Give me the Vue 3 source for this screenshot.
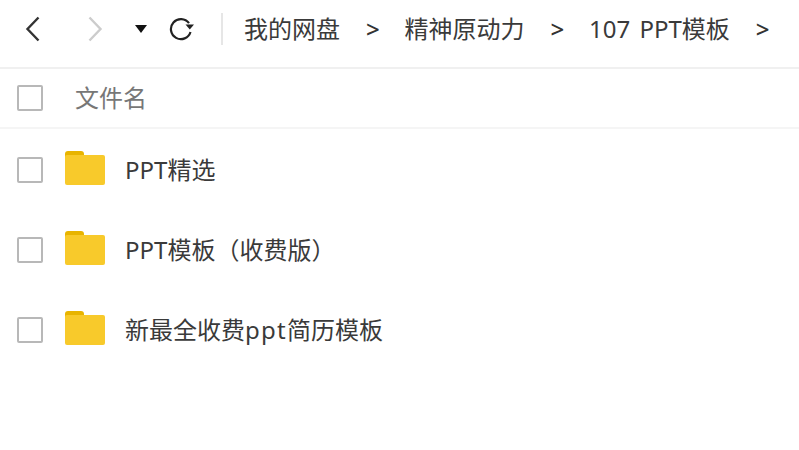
<script setup>
const crumbs = ['我的网盘', '精神原动力', '107 PPT模板']
const files = [
  ['PPT精选'],
  ['PPT模板（收费版）'],
  ['新最全收费', 'ppt', '简历模板'],
]
</script>

<template>
  <div class="page">
    <header class="toolbar">
      <svg class="ico back" width="16" height="26" viewBox="0 0 16 26"><path d="M13.5 1.5 2.5 13l11 11.5" /></svg>
      <svg class="ico fwd" width="16" height="26" viewBox="0 0 16 26"><path d="M2.5 1.5 13.5 13l-11 11.5" /></svg>
      <svg class="caret" width="12" height="8" viewBox="0 0 12 8"><path d="M0 0h12L6 8z" /></svg>
      <svg class="refresh" width="26" height="24" viewBox="0 0 26 24">
        <path d="M20 6.200A10 10 0 1 0 21.500 15" />
        <path class="fill" d="M16.500 7.500h8.500l-4.200 5z" />
      </svg>
      <span class="divider"></span>
      <nav class="crumbs">
        <template v-for="c in crumbs" :key="c">
          <span class="crumb">{{ c }}</span>
          <span class="sep">&gt;</span>
        </template>
      </nav>
    </header>
    <div class="head-row">
      <span class="check"></span>
      <span class="col">文件名</span>
    </div>
    <ul class="list">
      <li v-for="f in files" :key="f[0]" class="row">
        <span class="check"></span>
        <svg class="folder" width="40" height="34" viewBox="0 0 40 34">
          <path fill="#e8b400" d="M0 3a3 3 0 0 1 3-3h13a3 3 0 0 1 3 3v3H0z" />
          <path fill="#f8ca2b" d="M0 6a2 2 0 0 1 2-2h36a2 2 0 0 1 2 2v26a2 2 0 0 1-2 2H2a2 2 0 0 1-2-2z" />
        </svg>
        <span class="name"><span v-for="(p, i) in f" :key="i" :class="{ latin: i === 1 }">{{ p }}</span></span>
      </li>
    </ul>
  </div>
</template>

<style>
html, body { margin: 0; background: #fff; }
</style>

<style scoped>
.page {
  width: 799px;
  height: 450px;
  overflow: hidden;
  background: #fff;
  font-family: "Noto Sans", "Noto Sans CJK SC", sans-serif;
  color: #3a3a3a;
}
.toolbar {
  box-sizing: border-box;
  height: 69px;
  padding-bottom: 10px;
  border-bottom: 2px solid #f0f0f0;
  display: flex;
  align-items: center;
  white-space: nowrap;
}
.ico { fill: none; stroke-width: 2.4; flex: none; }
.back { margin-left: 25px; stroke: #333; }
.fwd { margin-left: 46px; stroke: #ccc; }
.caret { margin-left: 32px; fill: #111; flex: none; }
.refresh { margin-left: 22px; fill: none; stroke: #222; stroke-width: 2.2; flex: none; }
.refresh .fill { fill: #222; stroke: none; }
.divider { width: 2px; height: 32px; background: #e6e6e6; margin-left: 26px; flex: none; }
.crumbs { display: flex; align-items: center; margin-left: 21px; font-size: 24px; line-height: 32px; }
.crumb { word-spacing: 3px; }
.sep { margin: 0 24.500px 0 26px; width: 14px; font-size: 24px; font-weight: 500; color: #333; }
.head-row {
  box-sizing: border-box;
  height: 60px;
  border-bottom: 2px solid #f5f5f5;
  display: flex;
  align-items: center;
  padding-left: 17px;
}
.col { margin: 0 0 4px 32px; font-size: 24px; color: #777; }
.check {
  box-sizing: border-box;
  flex: none;
  width: 26px;
  height: 26px;
  border: 2px solid #b8b8b8;
  border-radius: 2px;
}
.list { list-style: none; margin: 0; padding: 1px 0 0; }
.row { height: 80px; display: flex; align-items: center; padding-left: 17px; }
.folder { margin: 0 0 4px 22px; flex: none; }
.name { margin: 0 0 4px 20px; font-size: 24px; }
.latin { letter-spacing: 1.300px; }
</style>
